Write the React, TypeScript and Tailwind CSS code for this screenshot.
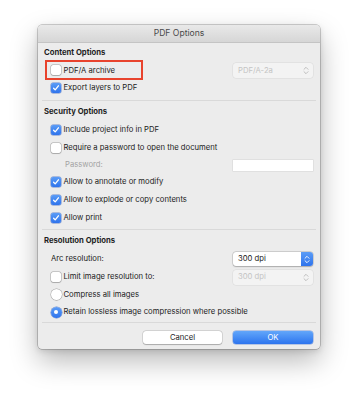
import React from "react";

const font = { fontFamily: 'Inter, "Liberation Sans", Arial, sans-serif' };

function Check({ checked }: { checked: boolean }) {
  if (checked) {
    return (
      <span className="flex h-[10px] w-[10px] shrink-0 items-center justify-center rounded-[2px] bg-gradient-to-b from-[#5b9cf6] to-[#2f73ec] shadow-[0_0_0_0.5px_rgba(20,70,180,0.6)]">
        <svg width="8" height="8" viewBox="0 0 8 8">
          <path d="M1.6 4.2 L3.2 5.9 L6.4 1.8" fill="none" stroke="white" strokeWidth="1.3" strokeLinecap="round" strokeLinejoin="round" />
        </svg>
      </span>
    );
  }
  return (
    <span className="h-[10px] w-[10px] shrink-0 rounded-[2px] bg-white shadow-[0_0_0_0.5px_rgba(0,0,0,0.3),0_0.5px_1px_rgba(0,0,0,0.15)]" />
  );
}

function Radio({ checked }: { checked: boolean }) {
  if (checked) {
    return (
      <span className="flex h-[11px] w-[11px] shrink-0 items-center justify-center rounded-full bg-gradient-to-b from-[#5b9cf6] to-[#2f73ec] shadow-[0_0_0_0.5px_rgba(20,70,180,0.6)]">
        <span className="h-[4px] w-[4px] rounded-full bg-white" />
      </span>
    );
  }
  return (
    <span className="h-[11px] w-[11px] shrink-0 rounded-full bg-white shadow-[0_0_0_0.5px_rgba(0,0,0,0.3),0_0.5px_1px_rgba(0,0,0,0.15)]" />
  );
}

function UpDown({ color }: { color: string }) {
  return (
    <svg width="6" height="9" viewBox="0 0 6 9">
      <path d="M1 3.3 L3 1.3 L5 3.3 M1 5.7 L3 7.7 L5 5.7" fill="none" stroke={color} strokeWidth="0.9" strokeLinecap="round" strokeLinejoin="round" />
    </svg>
  );
}

function DisabledPopup({ label }: { label: string }) {
  return (
    <div className="flex h-[15px] w-[80px] items-center justify-between rounded-[3px] bg-[#f3f3f3] pl-[5px] pr-[4px] text-[7.7px] text-[#c4c4c4] shadow-[0_0_0_0.5px_rgba(0,0,0,0.08)]">
      <span>{label}</span>
      <UpDown color="#b8b8b8" />
    </div>
  );
}

function ActivePopup({ label }: { label: string }) {
  return (
    <div className="flex h-[14px] w-[80px] items-stretch overflow-hidden rounded-[3px] bg-white text-[7.7px] text-[#222] shadow-[0_0_0_0.5px_rgba(0,0,0,0.2),0_0.5px_1.5px_rgba(0,0,0,0.2)]">
      <span className="flex flex-1 items-center pl-[5px]">{label}</span>
      <span className="flex w-[12px] items-center justify-center bg-gradient-to-b from-[#5b9cf6] to-[#2f73ec]">
        <UpDown color="#ffffff" />
      </span>
    </div>
  );
}

function Row({ children, h = "h-[18px]" }: { children: React.ReactNode; h?: string }) {
  return <div className={`relative flex ${h} items-center`}>{children}</div>;
}

function Heading({ children }: { children: React.ReactNode }) {
  return (
    <Row>
      <span className="pl-[6px] text-[7.7px] font-bold text-[#1e1e1e]">{children}</span>
    </Row>
  );
}

function CheckRow({ checked, label, right, h }: { checked: boolean; label: string; right?: React.ReactNode; h?: string }) {
  return (
    <Row h={h}>
      <div className="flex flex-1 items-center gap-[2.5px] pl-[13px]">
        <Check checked={checked} />
        <span className="text-[7.7px] text-[#222]">{label}</span>
      </div>
      {right && <div className="pr-[7px]">{right}</div>}
    </Row>
  );
}

function RadioRow({ checked, label }: { checked: boolean; label: string }) {
  return (
    <Row h="h-[17.5px]">
      <div className="flex flex-1 items-center gap-[2px] pl-[12.5px]">
        <Radio checked={checked} />
        <span className="text-[7.7px] text-[#222]">{label}</span>
      </div>
    </Row>
  );
}

function Sep() {
  return <div className="mx-[4px] h-px shrink-0 bg-[#d9d9d9]" />;
}

export default function App() {
  return (
    <div className="h-[400px] w-[358px] bg-white pl-[38px] pt-[25px]" style={font}>
      <div className="flex h-[324px] w-[282px] flex-col overflow-hidden rounded-[4px] bg-[#ececec] shadow-[0_0_0_0.5px_rgba(0,0,0,0.35),0_12px_28px_rgba(0,0,0,0.28),0_2px_6px_rgba(0,0,0,0.12)]">
        <div className="flex h-[18px] shrink-0 items-center justify-center border-b border-[#c4c4c4] bg-gradient-to-b from-[#e9e9e9] to-[#d6d6d6] text-[8.6px] text-[#4a4a4a]">
          PDF Options
        </div>
        <div className="flex flex-1 flex-col pt-[1px]">
          <Heading>Content Options</Heading>
          <Row h="h-[17px]">
            <div className="pointer-events-none absolute left-[7px] top-[-2px] h-[20px] w-[98px] border-2 border-[#e8432d]" />
            <div className="flex flex-1 items-center gap-[2.5px] pl-[13px]">
              <Check checked={false} />
              <span className="text-[7.7px] text-[#222]">PDF/A archive</span>
            </div>
            <div className="pr-[7px]">
              <DisabledPopup label="PDF/A-2a" />
            </div>
          </Row>
          <CheckRow checked label="Export layers to PDF" />
          <div className="mt-[3px]" />
          <Sep />
          <div className="mt-[2px]" />
          <Heading>Security Options</Heading>
          <CheckRow checked label="Include project info in PDF" />
          <CheckRow checked={false} label="Require a password to open the document" />
          <Row h="h-[16px]">
            <span className="flex-1 pl-[27px] text-[7.7px] text-[#a3a3a3]">Password:</span>
            <div className="mr-[7px] h-[11px] w-[80px] bg-white shadow-[0_0_0_0.5px_rgba(0,0,0,0.1)]" />
          </Row>
          <CheckRow checked label="Allow to annotate or modify" />
          <CheckRow checked label="Allow to explode or copy contents" />
          <CheckRow checked label="Allow print" />
          <div className="mt-[2px]" />
          <Sep />
          <div className="mt-[2px]" />
          <Heading>Resolution Options</Heading>
          <Row>
            <span className="flex-1 pl-[13px] text-[7.7px] text-[#222]">Arc resolution:</span>
            <div className="pr-[7px]">
              <ActivePopup label="300 dpi" />
            </div>
          </Row>
          <CheckRow checked={false} label="Limit image resolution to:" right={<DisabledPopup label="300 dpi" />} />
          <RadioRow checked={false} label="Compress all images" />
          <RadioRow checked label="Retain lossless image compression where possible" />
          <div className="mt-[1px]" />
          <Sep />
          <div className="mt-[8px] flex justify-end gap-[11px] pr-[7px]">
            <button className="flex h-[13px] w-[79px] items-center justify-center rounded-[3px] bg-white text-[7.7px] text-[#222] shadow-[0_0_0_0.5px_rgba(0,0,0,0.18),0_0.5px_1px_rgba(0,0,0,0.2)]">
              Cancel
            </button>
            <button className="flex h-[13px] w-[80px] items-center justify-center rounded-[3px] bg-gradient-to-b from-[#62a6fa] to-[#2d74ee] text-[7.7px] text-white shadow-[0_0_0_0.5px_rgba(20,80,200,0.5)]">
              OK
            </button>
          </div>
        </div>
      </div>
    </div>
  );
}
